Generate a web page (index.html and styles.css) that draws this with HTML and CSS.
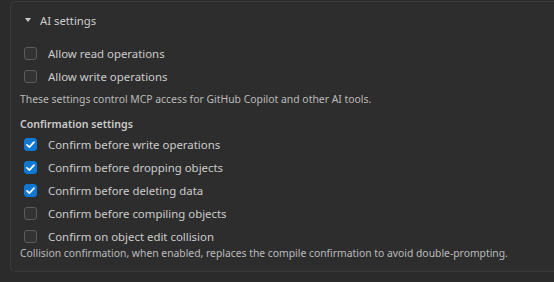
FILE: index.html
```html
<!DOCTYPE html>
<html>
<head>
<meta charset="utf-8">
<link rel="stylesheet" href="styles.css">
</head>
<body>
<div class="panel">
  <div class="header"><span class="caret"></span><span>AI settings</span></div>
  <label class="row"><span class="box"></span><span>Allow read operations</span></label>
  <label class="row"><span class="box"></span><span>Allow write operations</span></label>
  <p class="desc">These settings control MCP access for GitHub Copilot and other AI tools.</p>
  <p class="subhead">Confirmation settings</p>
  <label class="row"><span class="box on"><svg viewBox="0 0 13 13" width="13" height="13"><path d="M3 6.8 L5.4 9.1 L10 4.2" fill="none" stroke="#fff" stroke-width="1.7" stroke-linecap="round" stroke-linejoin="round"/></svg></span><span>Confirm before write operations</span></label>
  <label class="row"><span class="box on"><svg viewBox="0 0 13 13" width="13" height="13"><path d="M3 6.8 L5.4 9.1 L10 4.2" fill="none" stroke="#fff" stroke-width="1.7" stroke-linecap="round" stroke-linejoin="round"/></svg></span><span>Confirm before dropping objects</span></label>
  <label class="row"><span class="box on"><svg viewBox="0 0 13 13" width="13" height="13"><path d="M3 6.8 L5.4 9.1 L10 4.2" fill="none" stroke="#fff" stroke-width="1.7" stroke-linecap="round" stroke-linejoin="round"/></svg></span><span>Confirm before deleting data</span></label>
  <label class="row"><span class="box"></span><span>Confirm before compiling objects</span></label>
  <label class="row"><span class="box"></span><span>Confirm on object edit collision</span></label>
  <p class="desc foot">Collision confirmation, when enabled, replaces the compile confirmation to avoid double-prompting.</p>
</div>
</body>
</html>
```
FILE: styles.css
```css
html, body {
  margin: 0;
  padding: 0;
  background: #2b2b2b;
  font-family: "Noto Sans", "Open Sans", sans-serif;
  color: #cccccc;
}
.panel {
  margin: 1px 0 0 10px;
  border: 1px solid #3a3a3a;
  border-right: none;
  border-radius: 5px 0 0 5px;
  background: #2d2d2d;
  padding: 6px 0 10px 9px;
}
.header {
  display: flex;
  align-items: center;
  height: 24px;
  font-size: 11.3px;
  margin-bottom: 10px;
  padding-left: 5px;
}
.caret {
  width: 0;
  height: 0;
  border-left: 3px solid transparent;
  border-right: 3px solid transparent;
  border-top: 4px solid #cccccc;
  margin-right: 9px;
}
.row {
  display: flex;
  align-items: center;
  height: 23px;
  font-size: 11.4px;
  padding-left: 4px;
}
.box {
  box-sizing: border-box;
  width: 13px;
  height: 13px;
  border: 1px solid #5c5c5c;
  border-radius: 3px;
  background: #333333;
  margin-right: 11px;
  display: flex;
}
.box.on {
  background: #0f78d4;
  border-color: #0f78d4;
}
.box svg { margin: -1px; }
.desc {
  margin: 2px 0 0;
  font-size: 10.4px;
  line-height: 18px;
  color: #bbbbbb;
  white-space: nowrap;
}
.subhead {
  margin: 7px 0 0;
  font-size: 10.6px;
  line-height: 18px;
  font-weight: 600;
  color: #cccccc;
}
.desc.foot {
  margin-top: -3px;
  line-height: 16px;
  font-size: 10.35px;
}
```
